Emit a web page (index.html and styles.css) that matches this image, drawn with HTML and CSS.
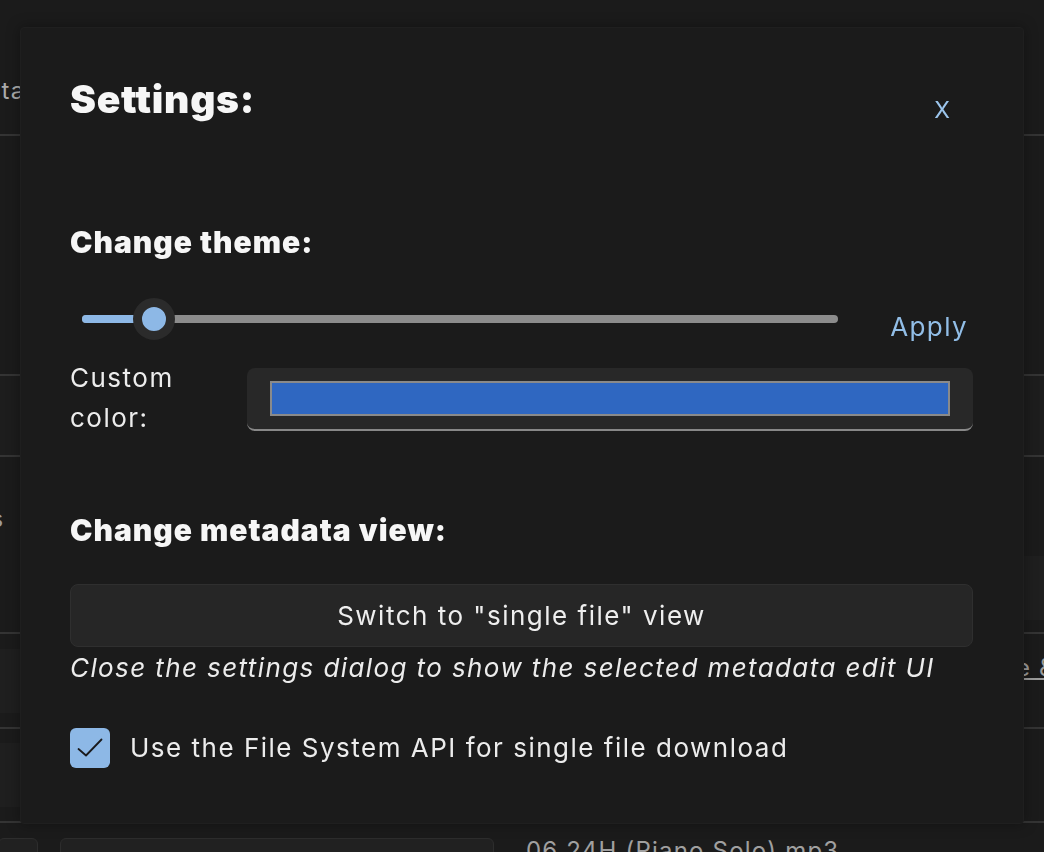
FILE: index.html
```html
<!DOCTYPE html>
<html lang="en">
<head>
<meta charset="utf-8">
<title>Settings</title>
<link rel="stylesheet" href="styles.css">
</head>
<body>
<div class="page">
  <div class="page-row head"><span class="page-title">Metadata</span><span class="page-bar"></span></div>
  <div class="page-row tall"></div>
  <div class="page-row mid"></div>
  <div class="page-row info">
    <span class="page-text">Files</span>
    <span class="page-box right"></span>
  </div>
  <div class="page-row box-row">
    <span class="page-box left"></span>
    <span class="page-link">Title &amp; Artist</span>
  </div>
  <div class="page-row box-row2"><span class="page-box left"></span></div>
  <div class="page-files">
    <span class="file-btn small"></span>
    <span class="file-btn wide"></span>
    <span class="file-name">06 24H (Piano Solo).mp3</span>
  </div>
</div>

<div class="overlay">
  <div class="dialog" role="dialog" aria-labelledby="dlg-title">
    <div class="dialog-head">
      <h1 id="dlg-title" class="dialog-title">Settings:</h1>
      <button class="close-btn" type="button">X</button>
    </div>

    <h2 class="section-title theme-title">Change theme:</h2>
    <div class="theme-row">
      <div class="slider">
        <div class="track"></div>
        <div class="fill" style="width: 72px"></div>
        <div class="thumb" style="left: 72px"></div>
      </div>
      <button class="apply-btn" type="button">Apply</button>
    </div>
    <div class="color-row">
      <label class="color-label">Custom color:</label>
      <div class="color-input"><div class="swatch"></div></div>
    </div>

    <h2 class="section-title meta-title">Change metadata view:</h2>
    <button class="switch-btn" type="button">Switch to "single file" view</button>
    <p class="hint">Close the settings dialog to show the selected metadata edit UI</p>

    <label class="check-row">
      <span class="checkbox">
        <svg width="40" height="40" viewBox="0 0 40 40" aria-hidden="true"><path d="M8.5 21 L16 27.5 L31.5 11.5" fill="none" stroke="#1a1a1c" stroke-width="1.8" stroke-linecap="round" stroke-linejoin="round"/></svg>
      </span>
      <span class="check-label">Use the File System API for single file download</span>
    </label>
  </div>
</div>
</body>
</html>
```

FILE: styles.css
```css
html, body {
  margin: 0;
  padding: 0;
  background: #1b1b1b;
  width: 1044px;
  height: 852px;
  overflow: hidden;
  font-family: Inter, "Noto Sans", "Liberation Sans", sans-serif;
  color: #ececec;
}

/* ---------- background page (dimmed behind modal) ---------- */
.page {
  display: flex;
  flex-direction: column;
  height: 852px;
  overflow: hidden;
  color: #9a9a9a;
  font-size: 24px;
  letter-spacing: 1.2px;
}
.page-row {
  flex: none;
  border-bottom: 2px solid #343434;
  display: flex;
  align-items: center;
  justify-content: space-between;
  box-sizing: border-box;
}
.page-row.head { height: 136px; justify-content: flex-start; }
.page-title {
  margin-left: -91px;
  margin-top: 46px;
  color: #ababab;
}
.page-bar {
  width: 1px;
  height: 26px;
  background: #555;
  margin-top: 46px;
  margin-left: 3px;
}
.page-row.tall { height: 240px; }
.page-row.mid { height: 81px; background: #1d1d1d; }
.page-row.info { height: 177px; }
.page-text { margin-left: -54px; margin-top: -52px; color: #9c9c9c; }
.page-box {
  display: block;
  height: 64px;
  background: #1f1f1f;
}
.page-box.right { width: 40px; margin-top: 86px; margin-right: -20px; }
.page-box.left { width: 40px; margin-left: -20px; }
.page-row.box-row { height: 95px; }
.page-link {
  margin-right: -87px;
  margin-top: -26px;
  text-decoration: underline;
  color: #9c9c9c;
}
.page-row.box-row2 { height: 94px; }
.page-files {
  flex: none;
  display: flex;
  align-items: flex-start;
  gap: 22px;
  padding-top: 15px;
}
.file-btn {
  display: block;
  height: 40px;
  background: #212121;
  border: 1px solid #2d2d2d;
  border-radius: 6px;
}
.file-btn.small { width: 38px; margin-left: -2px; }
.file-btn.wide { width: 432px; }
.file-name { color: #a0a0a0; margin-left: 10px; margin-top: -2px; }

/* ---------- modal ---------- */
.overlay {
  position: fixed;
  inset: 0;
}
.dialog {
  position: absolute;
  left: 20px;
  top: 27px;
  width: 1004px;
  height: 797px;
  box-sizing: border-box;
  padding: 43px 50px 0 49px;
  background: #1b1b1b;
  border: 1px solid #1f1f1f;
  border-radius: 4px;
  box-shadow: 0 0 14px rgba(0, 0, 0, 0.35);
  display: flex;
  flex-direction: column;
  letter-spacing: 1.5px;
}
.dialog-head {
  display: flex;
  justify-content: space-between;
  align-items: flex-start;
}
.dialog-title {
  margin: 0;
  font-size: 39px;
  font-weight: 900;
  line-height: 56px;
  color: #f6f6f6;
  letter-spacing: 0.7px;
}
.close-btn {
  background: none;
  border: none;
  padding: 0;
  margin: 25px 23px 0 0;
  font-family: inherit;
  font-size: 23px;
  font-weight: 400;
  line-height: 28px;
  letter-spacing: 0;
  color: #9cc5ec;
  cursor: pointer;
}

.section-title {
  margin: 0;
  font-size: 30px;
  font-weight: 900;
  line-height: 40px;
  letter-spacing: 1px;
  color: #f6f6f6;
}
.theme-title { margin-top: 95px; }

.theme-row {
  display: flex;
  align-items: center;
  margin-top: 35px;
  height: 44px;
}
.slider {
  position: relative;
  width: 756px;
  height: 44px;
  margin-left: 12px;
}
.track {
  position: absolute;
  left: 0;
  right: 0;
  top: 18px;
  height: 8px;
  border-radius: 4px;
  background: #8c8c8c;
}
.fill {
  position: absolute;
  left: 0;
  top: 18px;
  height: 8px;
  border-radius: 4px 0 0 4px;
  background: #8db8e6;
}
.thumb {
  position: absolute;
  top: 1px;
  width: 24px;
  height: 24px;
  margin-left: -21px;
  border: 9px solid #2b2b2b;
  border-radius: 50%;
  background: #8db8e6;
}
.apply-btn {
  margin-left: auto;
  margin-right: 5px;
  margin-top: 16px;
  background: none;
  border: none;
  padding: 0;
  font-family: inherit;
  font-size: 26px;
  line-height: 30px;
  letter-spacing: 1.4px;
  color: #92bee7;
  cursor: pointer;
}

.color-row {
  display: flex;
  align-items: flex-start;
  margin-top: 17px;
}
.color-label {
  width: 177px;
  flex: none;
  font-size: 26px;
  line-height: 40px;
  color: #ececec;
}
.color-input {
  flex: 1;
  height: 63px;
  margin-top: 10px;
  box-sizing: border-box;
  padding: 13px 23px 0 23px;
  background: #282828;
  border-radius: 8px;
  border-bottom: 2px solid #888;
}
.swatch {
  height: 35px;
  box-sizing: border-box;
  border: 2px solid #8a8a8a;
  background: #2f67c1;
}

.meta-title { margin-top: 72px; }
.switch-btn {
  margin-top: 34px;
  height: 63px;
  width: 100%;
  background: #262626;
  border: 1px solid #2f2f2f;
  border-radius: 8px;
  font-family: inherit;
  font-size: 26px;
  letter-spacing: 1.5px;
  color: #eeeeee;
  cursor: pointer;
}
.hint {
  margin: 0;
  font-size: 26px;
  font-style: italic;
  line-height: 42px;
  letter-spacing: 1.4px;
  color: #ececec;
}
.check-row {
  display: flex;
  align-items: center;
  gap: 20px;
  margin-top: 39px;
}
.checkbox {
  width: 40px;
  height: 40px;
  border-radius: 6px;
  background: #8db8e6;
  display: block;
  flex: none;
}
.checkbox svg { display: block; }
.check-label {
  font-size: 26px;
  line-height: 40px;
  color: #ececec;
}
```
